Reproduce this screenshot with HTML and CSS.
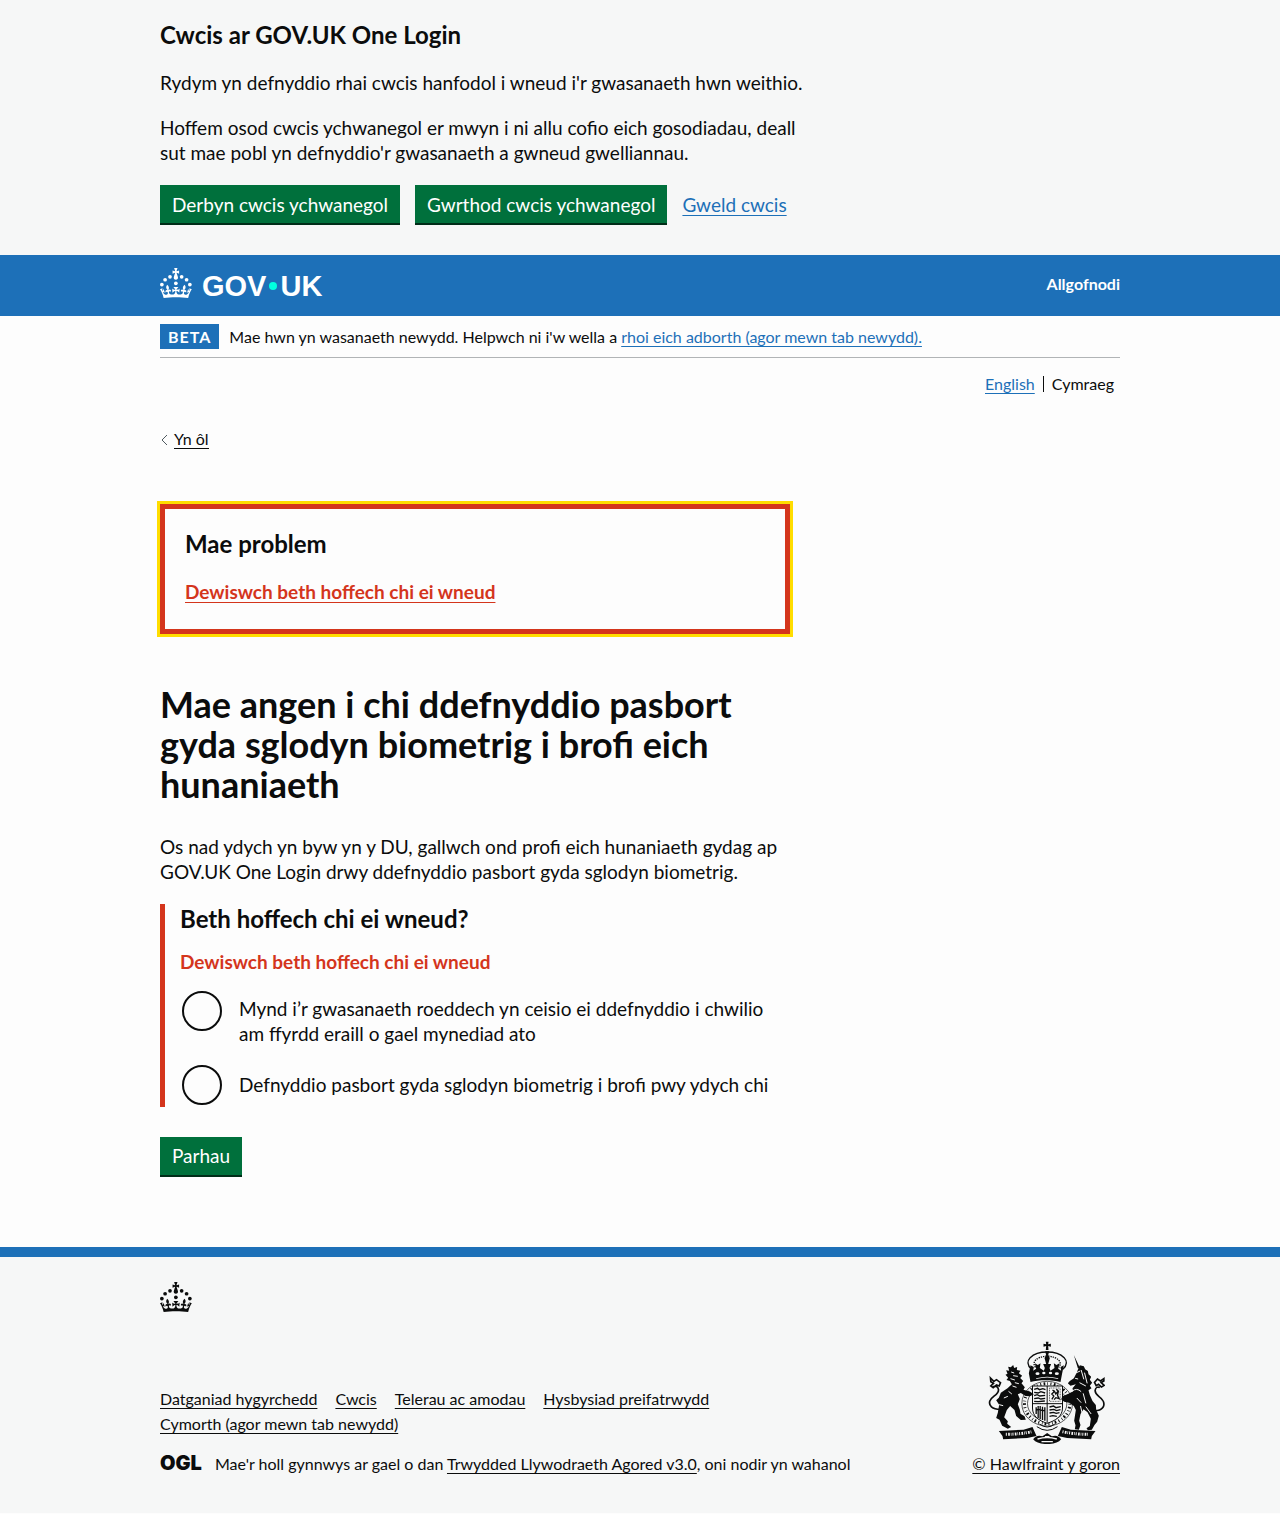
FILE: index.html
```html
<!DOCTYPE html>
<html lang="cy">
<head>
<meta charset="utf-8">
<meta name="viewport" content="width=device-width, initial-scale=1">
<title>Mae angen i chi ddefnyddio pasbort gyda sglodyn biometrig i brofi eich hunaniaeth</title>
<link rel="stylesheet" href="styles.css">
</head>
<body>
<svg width="0" height="0" class="sprite" aria-hidden="true">
  <symbol id="crown" viewBox="0 0 64 60">
    <circle cx="20" cy="17.6" r="3.7"/><circle cx="10.2" cy="23.5" r="3.7"/><circle cx="3.7" cy="33.2" r="3.7"/><circle cx="31.7" cy="30.6" r="3.7"/><circle cx="43.3" cy="17.6" r="3.7"/><circle cx="53.2" cy="23.5" r="3.7"/><circle cx="59.7" cy="33.2" r="3.7"/>
    <path d="M33.1,9.8c.2-.1.3-.3.5-.5l4.6,2.4v-6.8l-4.6,1.5c-.1-.2-.3-.3-.5-.5l1.9-5.9h-6.7l1.9,5.9c-.2.1-.3.3-.5.5l-4.6-1.5v6.8l4.6-2.4c.1.2.3.3.5.5l-2.6,8c-.9,2.8,1.2,5.7,4.1,5.7h0c3,0,5.1-2.9,4.1-5.7l-2.6-8ZM37,37.9s-3.4,3.8-4.1,6.1c2.2,0,4.2-.5,6.4-2.8l-.7,8.5c-2-2.8-4.4-4.1-5.7-3.8.1,3.1.5,6.7,5.8,7.2,3.7.3,6.7-1.5,7-3.8.4-2.6-2-4.3-3.7-1.6-1.4-4.5,2.4-6.1,4.9-3.2-1.9-4.5-1.8-7.7,2.4-10.9,3,4,2.6,7.3-1.2,11.1,2.4-1.3,6.2,0,4,4.6-1.2-2.8-3.7-2.2-4.2.2-.3,1.7.7,3.7,3,4.2,1.9.3,4.7-.9,7-5.9-1.3,0-2.4.7-3.9,1.7l2.4-8c.6,2.3,1.4,3.7,2.2,4.5.6-1.6.5-2.8,0-5.3l5,1.8c-2.6,3.6-5.2,8.7-7.3,17.5-7.4-1.1-15.7-1.7-24.5-1.7h0c-8.8,0-17.1.6-24.5,1.7-2.1-8.9-4.7-13.9-7.3-17.5l5-1.8c-.5,2.5-.6,3.7,0,5.3.8-.8,1.6-2.3,2.2-4.5l2.4,8c-1.5-1-2.6-1.7-3.9-1.7,2.3,5,5.2,6.2,7,5.9,2.3-.4,3.3-2.4,3-4.2-.5-2.4-3-3.1-4.2-.2-2.2-4.6,1.6-6,4-4.6-3.7-3.7-4.2-7.1-1.2-11.1,4.2,3.2,4.3,6.4,2.4,10.9,2.5-2.8,6.3-1.3,4.9,3.2-1.8-2.7-4.1-1-3.7,1.6.3,2.3,3.3,4.1,7,3.8,5.4-.5,5.7-4.2,5.8-7.2-1.3-.2-3.7,1-5.7,3.8l-.7-8.5c2.2,2.3,4.2,2.7,6.4,2.8-.7-2.3-4.1-6.1-4.1-6.1h10.6,0Z"/>
  </symbol>
</svg>

<section class="cookie-banner" aria-label="Cwcis ar GOV.UK One Login">
  <div class="container">
    <div class="cookie-text">
      <h2 class="heading-m">Cwcis ar GOV.UK One Login</h2>
      <p class="body">Rydym yn defnyddio rhai cwcis hanfodol i wneud i'r gwasanaeth hwn weithio.</p>
      <p class="body">Hoffem osod cwcis ychwanegol er mwyn i ni allu cofio eich gosodiadau, deall sut mae pobl yn defnyddio'r gwasanaeth a gwneud gwelliannau.</p>
    </div>
    <div class="button-group">
      <button type="button" class="button">Derbyn cwcis ychwanegol</button>
      <button type="button" class="button">Gwrthod cwcis ychwanegol</button>
      <a class="link" href="#cwcis">Gweld cwcis</a>
    </div>
  </div>
</section>

<header class="header">
  <div class="container header-row">
    <a class="logo" href="#gov" aria-label="GOV.UK">
      <svg class="crown" aria-hidden="true"><use href="#crown"/></svg>
      <span class="logo-text">GOV<span class="logo-dot"></span>UK</span>
    </a>
    <nav aria-label="Cyfrif"><a class="sign-out" href="#allgofnodi">Allgofnodi</a></nav>
  </div>
</header>

<div class="container">
  <div class="phase-banner">
    <strong class="tag">BETA</strong>
    <span>Mae hwn yn wasanaeth newydd. Helpwch ni i'w wella a <a class="link" href="#adborth">rhoi eich adborth (agor mewn tab newydd).</a></span>
  </div>
  <nav class="languages" aria-label="Dewis iaith">
    <a class="link" href="#en" lang="en">English</a>
    <span class="language-current" aria-current="true">Cymraeg</span>
  </nav>
  <a class="back-link" href="#back"><svg class="chevron" viewBox="0 0 8 12" aria-hidden="true"><path d="M7 1 2 6l5 5"/></svg><span>Yn ôl</span></a>

  <main class="main two-thirds">
    <div class="error-summary" role="alert">
      <h2 class="heading-m">Mae problem</h2>
      <a class="error-link" href="#dewis-1">Dewiswch beth hoffech chi ei wneud</a>
    </div>
    <h1 class="heading-l">Mae angen i chi ddefnyddio pasbort gyda sglodyn biometrig i brofi eich hunaniaeth</h1>
    <p class="body">Os nad ydych yn byw yn y DU, gallwch ond profi eich hunaniaeth gydag ap GOV.UK One Login drwy ddefnyddio pasbort gyda sglodyn biometrig.</p>
    <form>
      <div class="form-group">
        <fieldset aria-describedby="gwall">
          <legend class="heading-m">Beth hoffech chi ei wneud?</legend>
          <p class="error-message" id="gwall">Dewiswch beth hoffech chi ei wneud</p>
          <div class="radios">
            <div class="radio">
              <input type="radio" name="dewis" id="dewis-1">
              <label for="dewis-1">Mynd i’r gwasanaeth roeddech yn ceisio ei ddefnyddio i chwilio am ffyrdd eraill o gael mynediad ato</label>
            </div>
            <div class="radio">
              <input type="radio" name="dewis" id="dewis-2">
              <label for="dewis-2">Defnyddio pasbort gyda sglodyn biometrig i brofi pwy ydych chi</label>
            </div>
          </div>
        </fieldset>
      </div>
      <button type="button" class="button">Parhau</button>
    </form>
  </main>
</div>

<footer class="footer">
  <div class="container">
    <svg class="crown" aria-hidden="true"><use href="#crown"/></svg>
    <div class="footer-row">
      <div class="footer-meta">
        <ul class="footer-links">
          <li><a href="#hygyrchedd">Datganiad hygyrchedd</a></li>
          <li><a href="#cwcis">Cwcis</a></li>
          <li><a href="#telerau">Telerau ac amodau</a></li>
          <li><a href="#preifatrwydd">Hysbysiad preifatrwydd</a></li>
          <li><a href="#cymorth">Cymorth (agor mewn tab newydd)</a></li>
        </ul>
        <div class="licence">
          <span class="ogl" aria-hidden="true">OGL</span>
          <span>Mae'r holl gynnwys ar gael o dan <a href="#ogl">Trwydded Llywodraeth Agored v3.0</a>, oni nodir yn wahanol</span>
        </div>
      </div>
      <a class="copyright" href="#hawlfraint">
        <svg class="crest" viewBox="60 33 348 309" aria-hidden="true">
          <!-- royal crown -->
          <g fill="none" stroke="#0b0c0c" stroke-width="4">
            <path d="M189 118c-13-12-13-25-4-35 12-12 30-17 51-17s39 5 51 17c9 10 9 23-4 35"/>
            <path d="M201 112c-12-16 2-31 35-34 33 3 47 18 35 34" stroke-dasharray="4 3"/>
          </g>
          <path d="M232 35h8l-1 8 8-2v9l-8-2 1 12h-8l1-12-8 2v-9l8 2zM230 64h12l-3 12 5 8-6 22h-4l-6-22 5-8z"/>
          <path d="M186 106l10 5-2 11 9-6-4-16 9 5 8-5-2 14 12 8 3-8-5-12h24l-5 12 3 8 12-8-2-14 8 5 9-5-4 16 9 6-2-11 10-5-5 24-5 26c-23-7-67-7-90 0l-5-26z"/>
          <g fill="#f7f7f7"><ellipse cx="207" cy="131" rx="6" ry="4"/><ellipse cx="226" cy="129" rx="5" ry="4"/><ellipse cx="246" cy="129" rx="5" ry="4"/><ellipse cx="265" cy="131" rx="6" ry="4"/><path d="M203 145q33-9 66 0v2q-33-9-66 0z"/></g>
          <!-- garter and shield -->
          <ellipse cx="236" cy="221" rx="76" ry="67" fill="none" stroke="#0b0c0c" stroke-width="2"/>
          <ellipse cx="236" cy="221" rx="68" ry="60" fill="none" stroke="#0b0c0c" stroke-width="9" stroke-dasharray="3 7 5 6 2 8"/>
          <ellipse cx="236" cy="221" rx="59" ry="51" fill="#f7f7f7" stroke="#0b0c0c" stroke-width="2"/>
          <path d="M192 168h90v66c0 26-22 38-46 46-24-8-44-20-44-46z" fill="#f7f7f7" stroke="#0b0c0c" stroke-width="3"/>
          <g fill="none" stroke="#0b0c0c" stroke-width="4">
            <path d="M236 168v110M192 221h90" stroke-width="3"/>
            <path d="M197 178l10-3 6 4 10-3 8 3M197 187l12 2 8-4 13 4M197 197l9-3 8 4 16-2M197 206l12-2 8 3 13-2M197 214l12 1 20-2"/>
            <path d="M243 174h32v40h-32z" stroke-width="2" stroke-dasharray="3 2"/>
            <path d="M250 208l6-10-6-6 8-8 4 8 8-10-3 14 5 10-10-3-5 6M252 180l7 5M263 178l6 4"/>
            <path d="M203 232v20M209 228v36M215 228v40M222 230v40M229 232v40M204 240c10-8 18 8 26 0"/>
            <path d="M243 231l12-3 7 5 15-3M243 240l13-2 8 4 12-3M243 249l12-2 8 3 10-2M243 259l10-2 12 2"/>
            <path d="M205 290q31 22 62 0M213 282q23 18 46 0" stroke-width="3"/>
          </g>
          <!-- lion -->
          <path d="M122 105l5 7 7-7 3 9 9-3-1 9 11 2-5 8 10 7-6 7 9 9-5 7 10 12-4 7 20 6 11 8-12 6-13-1-14-9-9 4 6 14-6 16 6 16 2 12 12 8 4 10-15 1-14-12-5-18-13-12-10 12-8 22 11 12-2 7 12 10-10 5-17-9-8-18-10-5 5-16 4-24-9-13 8-8 6-15 20-13 13-12-6-10-10-3 5-7-8-9 6-3-4-10 9 1-3-12 8 2z"/>
          <path d="M96 238c-26 0-36-12-32-25 5-15 27-18 26-34-1-10-10-13-16-8M66 144l10 10 8-5 12 9-4 10-8-3-10 8-7-5 8-8-8-5z" fill="none" stroke="#0b0c0c" stroke-width="5"/>
          <path d="M128 126l9 3M134 137l14 2M126 146l13 4M139 158l12 3M132 168l12 4M120 184l10 8M106 204l12-5M92 224l12 3M119 250l8 8" stroke="#f7f7f7" stroke-width="3"/>
          <!-- unicorn -->
          <path d="M316 75l18 38-6 2zM334 106l12 3 4 9 8 5 2 10 8 7-4 9 7 9-7 9 5 8-9 6 4 14 8 18 10 12 1 14 8 18-5 18-8 10-8 14-12 2-4-6 10-7 3-22-10-19-12-9-9 14-4 20 4 13-5 14-12-1 2-12-4-14 5-32-6-12-14-10-15-3-9-7 4-9 18-8 14-7-2-9 10-12-16 4-8-7 6-7 12-8 7-14z"/>
          <path d="M378 242c26 0 32-16 26-29-6-14-26-16-24-32 1-9 8-12 14-8M406 146l-10 7-9-6-9 10 5 10 7-4 9 8 8-5-9-8 8-5z" fill="none" stroke="#0b0c0c" stroke-width="5"/>
          <path d="M308 135l27-12M338 120l8 28M348 128l8 32M333 158l19 10M310 184q15-12 28 1M325 204l13 14M344 190l8 30M336 228l9 40M352 230l16 22M320 145l9 2" stroke="#f7f7f7" stroke-width="3" fill="none"/>
          <!-- motto scroll -->
          <path d="M91 303l74-4 27-8 12 27-28 6-72 4-2-10z"/><path d="M381 303l-74-4-27-8-12 27 28 6 72 4 2-10z"/>
          <path d="M112 313q39 0 79-8M282 305q39 8 78 8" fill="none" stroke="#f7f7f7" stroke-width="9" stroke-dasharray="3 4 5 3 2 3"/>
          <path d="M194 328q10-15 28-9l14-10 14 10q18-6 28 9-12 15-42 14-30 1-42-14z"/>
          <path d="M207 327q29-9 58 0M219 335h34M229 320h14" fill="none" stroke="#f7f7f7" stroke-width="4"/>
        </svg>
        <span>© Hawlfraint y goron</span>
      </a>
    </div>
  </div>
</footer>
</body>
</html>
```
FILE: styles.css
```css
* { box-sizing: border-box; }
body {
  margin: 0;
  background: #fdfdfd;
  color: #0b0c0c;
  font-family: Lato, "Liberation Sans", sans-serif;
  font-size: 19px;
  line-height: 25px;
}
.sprite { display: block; }
.container { max-width: 960px; margin: 0 auto; }
.two-thirds { max-width: 630px; }
.cookie-text { max-width: 650px; }
h1, h2, p, ul { margin: 0; }
.heading-m { font-size: 24px; line-height: 30px; font-weight: 700; }
.heading-l { font-size: 36px; line-height: 40px; font-weight: 700; margin-bottom: 30px; }
.body { margin-bottom: 20px; }
a { color: inherit; text-decoration-thickness: 1px; text-underline-offset: 3px; }
.link { color: #1d70b8; }

.button {
  border: 0;
  border-radius: 0;
  background: #00703c;
  box-shadow: 0 2px 0 #002d18;
  color: #fff;
  font: inherit;
  height: 38px;
  padding: 0 12px;
  cursor: pointer;
}
.button-group { display: flex; align-items: center; gap: 15px; }

.cookie-banner { background: #f6f7f7; padding: 20px 0 32px; }
.cookie-banner .heading-m { margin-bottom: 20px; }

.header { background: #1d70b8; color: #fff; }
.header-row { display: flex; justify-content: space-between; align-items: flex-start; padding: 13px 0 16px; }
.crown { display: block; width: 32px; height: 30px; fill: currentColor; }
.logo { display: flex; align-items: flex-end; gap: 10px; text-decoration: none; }
.logo-text { display: flex; align-items: center; font: 700 29px/24px "Liberation Sans", Arial, sans-serif; }
.logo-dot { width: 8px; height: 8px; margin: 0 3px; border-radius: 50%; background: #00ffe0; }
.sign-out { display: block; font-size: 16px; line-height: 32px; font-weight: 700; text-decoration: none; }

.phase-banner {
  display: flex;
  align-items: center;
  gap: 10px;
  padding: 8px 0;
  border-bottom: 1px solid #b1b4b6;
  font-size: 16px;
}
.tag { padding: 0 8px; background: #1d70b8; color: #fff; letter-spacing: 1px; }
.languages { display: flex; justify-content: flex-end; align-items: center; gap: 8px; padding: 18px 6px 18px 0; font-size: 16px; line-height: 16px; }
.language-current { padding-left: 8px; border-left: 1px solid #0b0c0c; }
.back-link { display: inline-flex; align-items: center; gap: 6px; margin-top: 20px; font-size: 16px; text-decoration: none; }
.back-link span { border-bottom: 1px solid #0b0c0c; line-height: 18px; }
.chevron { width: 8px; height: 12px; fill: none; stroke: #505a5f; }

.main { padding: 53px 0 72px; }
.error-summary { margin-bottom: 50px; padding: 20px 20px 25px; border: 5px solid #d4351c; outline: 3px solid #fd0; }
.error-summary .heading-m { margin-bottom: 20px; }
.error-link { display: block; color: #d4351c; font-weight: 700; }
.form-group { margin-bottom: 30px; padding-left: 15px; border-left: 5px solid #d4351c; }
fieldset { min-width: 0; margin: 0; padding: 0; border: 0; }
legend { padding: 0; margin-bottom: 15px; }
.error-message { margin-bottom: 15px; color: #d4351c; font-weight: 700; }
.radios { display: grid; gap: 10px; }
.radio { display: flex; align-items: center; gap: 17px; min-height: 44px; padding-left: 2px; }
.radio input { flex: none; align-self: flex-start; appearance: none; width: 40px; height: 40px; margin: 2px 0; border: 2px solid #0b0c0c; border-radius: 50%; background: #fdfdfd; }
.radio label { padding: 7px 0; }

.footer { border-top: 10px solid #1d70b8; background: #f6f7f7; padding: 25px 0; font-size: 16px; }
.footer-row { display: flex; justify-content: space-between; align-items: flex-end; padding: 29px 0 12px; }
.footer-links { display: flex; flex-wrap: wrap; column-gap: 18px; max-width: 630px; margin-bottom: 15px; padding: 0; list-style: none; }
.licence { display: flex; align-items: center; gap: 13px; }
.ogl { font: 900 20px/24px Inter, sans-serif; }
.copyright { display: flex; flex-direction: column; align-items: center; gap: 7px; }
.crest { width: 117px; height: 103px; fill: #0b0c0c; }
```
